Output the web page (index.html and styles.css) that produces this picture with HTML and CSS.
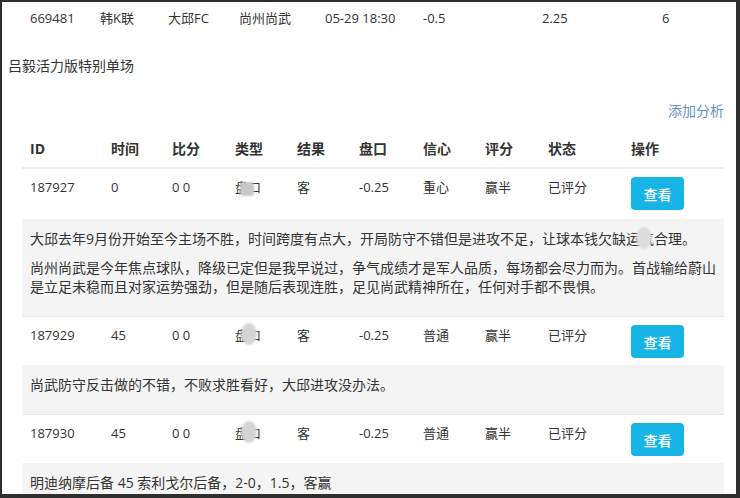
FILE: index.html
```html
<!DOCTYPE html>
<html lang="zh-CN">
<head>
    <meta charset="UTF-8">
    <meta name="viewport" content="width=device-width, initial-scale=1.0">
    <title>单场分析</title>
    <link rel="stylesheet" href="styles.css">
</head>
<body>

    <div class="page">
        <!-- match summary -->
        <div class="match">
            <span>669481</span>
            <span>韩K联</span>
            <span>大邱FC</span>
            <span>尚州尚武</span>
            <span>05-29 18:30</span>
            <span>-0.5</span>
            <span>2.25</span>
            <span>6</span>
        </div>

        <div class="title">吕毅活力版特别单场</div>

        <div class="actions"><a href="#" class="add-link">添加分析</a></div>

        <!-- analysis table -->
        <div class="table">
            <div class="row head">
                <span>ID</span>
                <span>时间</span>
                <span>比分</span>
                <span>类型</span>
                <span>结果</span>
                <span>盘口</span>
                <span>信心</span>
                <span>评分</span>
                <span>状态</span>
                <span>操作</span>
            </div>

            <div class="row first">
                <span>187927</span>
                <span>0</span>
                <span>0 0</span>
                <span class="masked">盘口<i class="blot square"></i></span>
                <span>客</span>
                <span>-0.25</span>
                <span>重心</span>
                <span>赢半</span>
                <span>已评分</span>
                <span><button class="btn-view">查看</button></span>
            </div>
            <div class="note">
                <p>大邱去年9月份开始至今主场不胜，时间跨度有点大，开局防守不错但是进攻不足，让球本钱欠缺<span class="masked">运气<i class="blot text-blot"></i></span>合理。</p>
                <p>尚州尚武是今年焦点球队，降级已定但是我早说过，争气成绩才是军人品质，每场都会尽力而为。首战输给蔚山是立足未稳而且对家运势强劲，但是随后表现连胜，足见尚武精神所在，任何对手都不畏惧。</p>
            </div>

            <div class="row">
                <span>187929</span>
                <span>45</span>
                <span>0 0</span>
                <span class="masked">盘口<i class="blot"></i></span>
                <span>客</span>
                <span>-0.25</span>
                <span>普通</span>
                <span>赢半</span>
                <span>已评分</span>
                <span><button class="btn-view">查看</button></span>
            </div>
            <div class="note">
                <p>尚武防守反击做的不错，不败求胜看好，大邱进攻没办法。</p>
            </div>

            <div class="row">
                <span>187930</span>
                <span>45</span>
                <span>0 0</span>
                <span class="masked">盘口<i class="blot"></i></span>
                <span>客</span>
                <span>-0.25</span>
                <span>普通</span>
                <span>赢半</span>
                <span>已评分</span>
                <span><button class="btn-view">查看</button></span>
            </div>
            <div class="note">
                <p>明迪纳摩后备 45 索利戈尔后备，2-0，1.5，客赢</p>
            </div>
        </div>
    </div>

</body>
</html>
```

FILE: styles.css
```css
html, body {
    margin: 0;
    padding: 0;
    background-color: #2f2f2f;
}

body {
    height: 498px;
    overflow: hidden;
    padding: 2px 4px 0 2px;
    box-sizing: border-box;
    font-family: "Open Sans", "Noto Sans CJK SC", sans-serif;
    font-size: 14px;
    line-height: 20px;
    color: #333;
}

.page {
    background-color: #fff;
    height: 492px;
    overflow: hidden;
}

/* top summary line */
.match {
    display: grid;
    grid-template-columns: 70px 68px 71px 86px 98px 119px 120px 1fr;
    padding: 6px 0 0 28px;
    font-size: 13px;
}

.title {
    padding-left: 6px;
    margin-top: 28px;
}

.actions {
    text-align: right;
    padding-right: 12px;
    margin-top: 25px;
}

.add-link {
    color: #5f92c0;
    text-decoration: none;
}

/* table */
.table {
    margin: 10px 12px 0 20px;
}

.row {
    display: grid;
    grid-template-columns: 81px 61px 63px 62px 62px 64px 62px 63px 83px 1fr;
    border-top: 1px solid #e8e8e8;
    font-size: 13px;
}

.row span {
    padding: 8px 8px 7px;
}

.row.first span {
    padding-bottom: 9px;
}

.row.head {
    border-top: none;
    border-bottom: 2px solid #ececec;
    font-weight: bold;
    font-size: 14px;
}

.row.head span {
    padding: 8px 8px 8px;
}

.row.head + .row {
    border-top: none;
}

.btn-view {
    width: 53px;
    height: 33px;
    border: none;
    border-radius: 4px;
    background-color: #17b4e6;
    color: #fff;
    font-family: inherit;
    font-size: 14px;
    font-weight: 500;
    padding: 0;
    cursor: pointer;
}

.note {
    background-color: #f4f4f4;
    padding: 10px 8px 10px;
    font-size: 14px;
    line-height: 19px;
}

.note p {
    margin: 0 0 10px;
}

/* censor blots from the screenshot */
.masked {
    position: relative;
}

.blot {
    position: absolute;
    left: 14px;
    top: 6px;
    width: 16px;
    height: 22px;
    border-radius: 50%;
    background-color: #d4d4d4;
    filter: blur(1px);
}

.blot.square {
    top: 13px;
    left: 13px;
    width: 14px;
    height: 14px;
    border-radius: 3px;
    background-color: #c8c8c8;
}

.blot.text-blot {
    left: 10px;
    top: -2px;
    width: 16px;
    height: 22px;
    background-color: #dcdcdc;
}
```
